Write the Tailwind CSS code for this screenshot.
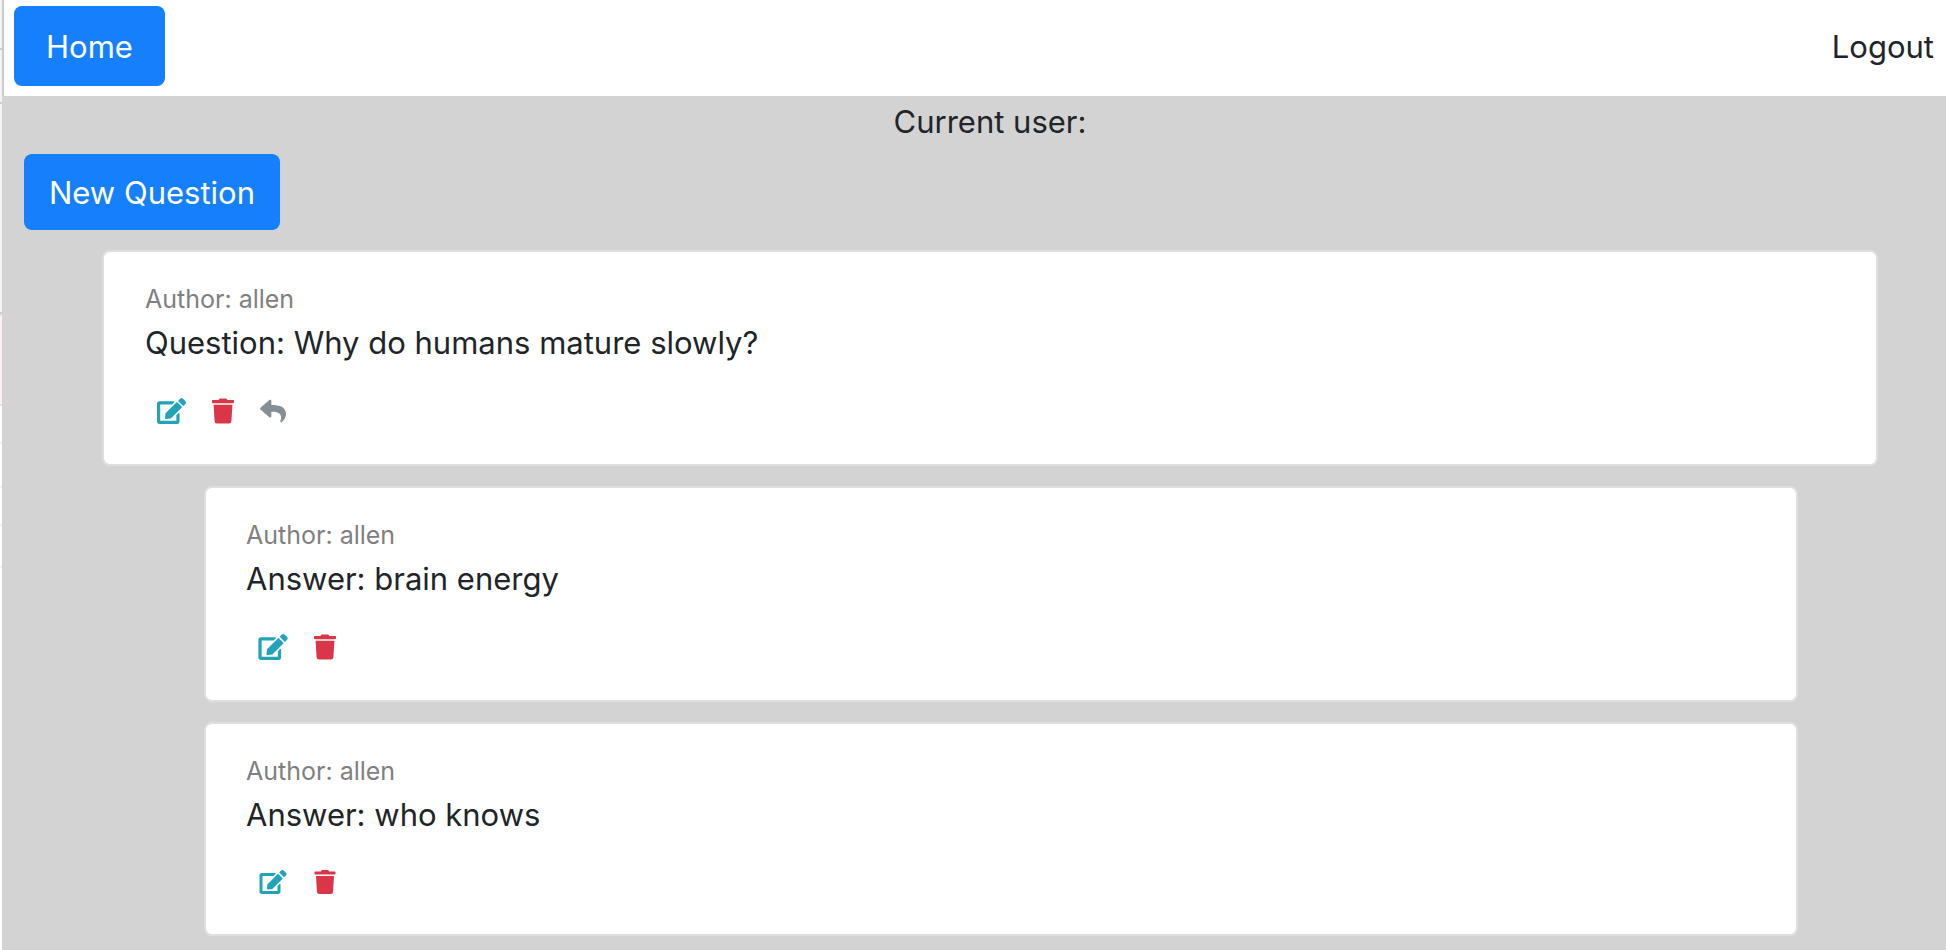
<!DOCTYPE html>
<html lang="en">
<head>
<meta charset="utf-8">
<title>Questions</title>
<script src="https://cdn.jsdelivr.net/npm/@tailwindcss/browser@4"></script>
</head>
<body class="flex min-h-screen bg-[#d3d3d3] font-[Inter,sans-serif] text-[31px] leading-[48px] text-[#212529]">
<svg class="hidden">
  <symbol id="edit" viewBox="0 0 576 512"><path d="M402.6 83.2l90.2 90.2c3.8 3.8 3.8 10 0 13.8L274.4 405.6l-92.8 10.3c-12.4 1.4-22.9-9.1-21.5-21.5l10.3-92.8L388.8 83.2c3.8-3.8 10-3.8 13.8 0zm162-22.9l-48.8-48.8c-15.2-15.2-39.9-15.2-55.2 0l-35.4 35.4c-3.8 3.8-3.8 10 0 13.8l90.2 90.2c3.8 3.8 10 3.8 13.8 0l35.4-35.4c15.2-15.3 15.2-40 0-55.2zM384 346.2V448H64V128h229.8c3.2 0 6.2-1.3 8.5-3.5l40-40c7.6-7.6 2.2-20.5-8.5-20.5H48C21.5 64 0 85.5 0 112v352c0 26.5 21.5 48 48 48h352c26.5 0 48-21.5 48-48V306.2c0-10.7-12.9-16-20.5-8.5l-40 40c-2.2 2.3-3.5 5.3-3.5 8.5z"/></symbol>
  <symbol id="trash" viewBox="0 0 448 512"><path d="M432 32H312l-9.4-18.7A24 24 0 0 0 281.1 0H166.8a23.72 23.72 0 0 0-21.4 13.3L136 32H16A16 16 0 0 0 0 48v32a16 16 0 0 0 16 16h416a16 16 0 0 0 16-16V48a16 16 0 0 0-16-16zM53.2 467a48 48 0 0 0 47.9 45h245.8a48 48 0 0 0 47.9-45L416 128H32z"/></symbol>
  <symbol id="reply" viewBox="0 0 512 512"><path d="M8.309 189.836L184.313 37.851C199.719 24.546 224 35.347 224 56.015v80.053c160.629 1.839 288 34.032 288 186.258 0 61.441-39.581 122.309-83.333 154.132-13.653 9.931-33.111-2.533-28.077-18.631 45.344-145.012-21.507-183.51-176.59-185.742V360c0 20.7-24.3 31.453-39.687 18.164l-176.004-152c-11.071-9.562-11.086-26.753 0-36.328z"/></symbol>
</svg>
<aside class="flex w-[2px] shrink-0 flex-col bg-white">
  <div class="h-[50px] border-b-2 border-[#cbcbcb] bg-[#f3f3f3]"></div>
  <div class="h-[54px] border-b-2 border-[#cbcbcb] bg-[#f3f3f3]"></div>
  <div class="h-[210px] border-b-2 border-[#cbcbcb] bg-[#f3f3f3]"></div>
  <div class="h-[92px] border-y-2 border-[#ffd6d9] bg-[#fff0f0]"></div>
  <div class="h-[38px] border-b-2 border-[#f0f0f0]"></div>
  <div class="h-[44px] border-b-2 border-[#f0f0f0]"></div>
  <div class="h-[38px] border-b-2 border-[#f0f0f0]"></div>
  <div class="h-[42px] border-b-2 border-[#f0f0f0]"></div>
</aside>
<div class="min-w-0 grow">
  <header class="flex h-24 items-start justify-between border-l-2 border-[#cbcbcb] bg-white pt-[6px] pr-3 pl-[10px]">
    <a href="#" class="rounded-lg bg-[#167ffc] px-8 pt-[17px] pb-[15px] text-white">Home</a>
    <a href="#" class="pt-[17px] pb-[15px]">Logout</a>
  </header>
  <main class="pb-3">
    <p class="pt-[2px] pr-[68px] pl-[100px] text-center">Current user:</p>
    <button class="mt-2 ml-[22px] block rounded-lg bg-[#167ffc] px-[25px] pt-[15px] pb-[13px] text-white">New Question</button>
    <div class="mt-5 mr-[68px] ml-[100px] flex flex-col gap-5">
      <article class="rounded-lg border-2 border-[#dfdfdf] bg-white px-[41px] pt-7 pb-10">
        <p class="text-[25px] leading-[39px] text-[#808080]">Author: allen</p>
        <p>Question: Why do humans mature slowly?</p>
        <div class="mt-[31px] flex gap-[26px] pl-3">
          <button aria-label="Edit" class="text-[#21a3b9]"><svg class="h-[26px] w-[29px] fill-current"><use href="#edit"/></svg></button>
          <button aria-label="Delete" class="text-[#da3648]"><svg class="h-[26px] w-[22px] fill-current"><use href="#trash"/></svg></button>
          <button aria-label="Reply" class="text-[#868e96]"><svg class="h-[26px] w-[26px] fill-current"><use href="#reply"/></svg></button>
        </div>
      </article>
      <article class="mr-20 ml-[102px] rounded-lg border-2 border-[#dfdfdf] bg-white px-10 pt-7 pb-10">
        <p class="text-[25px] leading-[39px] text-[#808080]">Author: allen</p>
        <p>Answer: brain energy</p>
        <div class="mt-[31px] flex gap-[26px] pl-3">
          <button aria-label="Edit" class="text-[#21a3b9]"><svg class="h-[26px] w-[30px] fill-current"><use href="#edit"/></svg></button>
          <button aria-label="Delete" class="text-[#da3648]"><svg class="h-[26px] w-[22px] fill-current"><use href="#trash"/></svg></button>
        </div>
      </article>
      <article class="mr-20 ml-[102px] rounded-lg border-2 border-[#dfdfdf] bg-white px-10 pt-7 pb-10">
        <p class="text-[25px] leading-[39px] text-[#808080]">Author: allen</p>
        <p>Answer: who knows</p>
        <div class="mt-[31px] flex gap-[26px] pl-3">
          <button aria-label="Edit" class="text-[#21a3b9]"><svg class="h-[24px] w-[30px] fill-current" ><use href="#edit"/></svg></button>
          <button aria-label="Delete" class="text-[#da3648]"><svg class="h-[24px] w-[22px] fill-current"><use href="#trash"/></svg></button>
        </div>
      </article>
    </div>
  </main>
</div>
</body>
</html>
